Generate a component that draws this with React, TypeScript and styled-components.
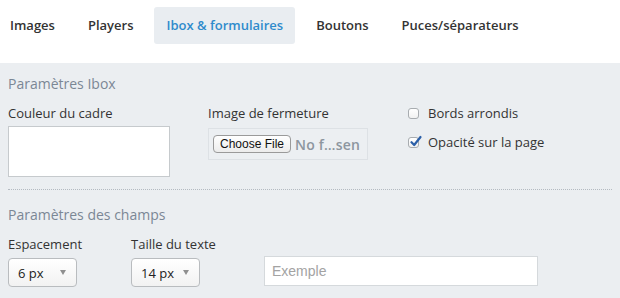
import React from "react";
import styled, { createGlobalStyle } from "styled-components";

const GlobalStyle = createGlobalStyle`
  html, body {
    margin: 0;
    padding: 0;
    background: #ffffff;
    font-family: "Open Sans", "Liberation Sans", sans-serif;
    color: #333333;
  }
  * {
    box-sizing: border-box;
  }
`;

const Page = styled.div`
  width: 620px;
  height: 298px;
  display: flex;
  flex-direction: column;
  overflow: hidden;
`;

const Nav = styled.nav`
  height: 63px;
  display: flex;
  align-items: flex-start;
  gap: 9px;
  padding-top: 7px;
  margin-left: -2px;
`;

const Tab = styled.div<{ $active?: boolean }>`
  height: 37px;
  line-height: 37px;
  padding: 0 12px;
  border-radius: 3px;
  font-size: 13px;
  font-weight: 600;
  color: ${(p) => (p.$active ? "#2f8bcc" : "#333333")};
  background: ${(p) => (p.$active ? "#e9edf1" : "transparent")};
  white-space: nowrap;
`;

const Panel = styled.div`
  flex: 1;
  background: #ebeef1;
  padding: 0 8px;
`;

const Section = styled.section<{ $top: number; $bottom?: number; $line?: boolean }>`
  padding-top: ${(p) => p.$top}px;
  padding-bottom: ${(p) => p.$bottom ?? 0}px;
  border-bottom: ${(p) => (p.$line ? "1px dotted #b4bac1" : "none")};
`;

const Heading = styled.h2`
  margin: 0 0 10px;
  font-size: 14px;
  line-height: 20px;
  font-weight: 400;
  color: #7b8795;
`;

const Row = styled.div<{ $cols: string }>`
  display: grid;
  grid-template-columns: ${(p) => p.$cols};
  align-items: start;
`;

const Field = styled.div`
  display: flex;
  flex-direction: column;
`;

const Label = styled.label`
  font-size: 13px;
  line-height: 18px;
  color: #333333;
`;

const ColorBox = styled.div`
  margin-top: 4px;
  width: 162px;
  height: 51px;
  background: #ffffff;
  border: 1px solid #c6cacd;
`;

const FileBox = styled.div`
  margin-top: 6px;
  width: 160px;
  height: 32px;
  border: 1px solid #dde1e5;
  background: #eceff2;
  display: flex;
  align-items: center;
  padding-left: 4px;
  gap: 4px;
`;

const FileButton = styled.button`
  height: 18px;
  padding: 0 6px;
  border: 1px solid #9a9a9a;
  border-radius: 4px;
  background: linear-gradient(#ffffff, #ececec);
  font-family: "Liberation Sans", sans-serif;
  font-size: 12px;
  line-height: 16px;
  color: #111111;
`;

const FileName = styled.span`
  font-size: 14px;
  font-weight: 600;
  color: #8d969f;
  letter-spacing: 0.2px;
`;

const Checks = styled.div`
  display: flex;
  flex-direction: column;
  gap: 11px;
`;

const CheckRow = styled.div`
  display: flex;
  align-items: center;
  gap: 9px;
  font-size: 13px;
  line-height: 18px;
  color: #333333;
`;

const Box = styled.span`
  position: relative;
  width: 11px;
  height: 11px;
  border: 1px solid #a8acb0;
  border-radius: 3px;
  background: linear-gradient(#ffffff, #f1f1f1);
  display: inline-block;
  flex: none;
`;

const Tick = styled.svg`
  position: absolute;
  left: 0px;
  top: -3px;
`;

const Select = styled.div<{ $width: number }>`
  margin-top: 5px;
  width: ${(p) => p.$width}px;
  height: 29px;
  border: 1px solid #b9bcbf;
  border-radius: 4px;
  background: linear-gradient(#ffffff, #f2f2f2);
  display: flex;
  align-items: center;
  justify-content: space-between;
  padding: 0 9px 0 9px;
  font-size: 13px;
  color: #222222;
`;

const Arrow = styled.span`
  width: 0;
  height: 0;
  border-left: 3px solid transparent;
  border-right: 3px solid transparent;
  border-top: 5px solid #8f8f8f;
  margin-right: 1px;
`;

const TextInput = styled.input`
  margin-top: 21px;
  width: 274px;
  height: 30px;
  border: 1px solid #d5d9dc;
  background: #ffffff;
  padding: 0 7px;
  font-family: "Liberation Sans", sans-serif;
  font-size: 14px;
  outline: none;
  &::placeholder {
    color: #a3a3a3;
  }
`;

const Check = ({ checked, label }: { checked?: boolean; label: string }) => (
  <CheckRow>
    <Box>
      {checked && (
        <Tick width="13" height="13" viewBox="0 0 13 13">
          <path
            d="M2.5 7.2 L5.2 10 L11.5 2"
            fill="none"
            stroke="#2b5fa8"
            strokeWidth="2.2"
            strokeLinecap="round"
            strokeLinejoin="round"
          />
        </Tick>
      )}
    </Box>
    {label}
  </CheckRow>
);

const tabs = ["Images", "Players", "Ibox & formulaires", "Boutons", "Puces/séparateurs"];

const App = () => {
  return (
    <Page>
      <GlobalStyle />
      <Nav>
        {tabs.map((t) => (
          <Tab key={t} $active={t === "Ibox & formulaires"}>
            {t}
          </Tab>
        ))}
      </Nav>
      <Panel>
        <Section $top={11} $bottom={12} $line>
          <Heading>Paramètres Ibox</Heading>
          <Row $cols="200px 200px auto">
            <Field>
              <Label>Couleur du cadre</Label>
              <ColorBox />
            </Field>
            <Field>
              <Label>Image de fermeture</Label>
              <FileBox>
                <FileButton>Choose File</FileButton>
                <FileName>No f…sen</FileName>
              </FileBox>
            </Field>
            <Checks>
              <Check label="Bords arrondis" />
              <Check checked label="Opacité sur la page" />
            </Checks>
          </Row>
        </Section>
        <Section $top={15}>
          <Heading>Paramètres des champs</Heading>
          <Row $cols="123px 133px auto">
            <Field>
              <Label>Espacement</Label>
              <Select $width={69}>
                6 px
                <Arrow />
              </Select>
            </Field>
            <Field>
              <Label>Taille du texte</Label>
              <Select $width={69}>
                14 px
                <Arrow />
              </Select>
            </Field>
            <Field>
              <TextInput placeholder="Exemple" />
            </Field>
          </Row>
        </Section>
      </Panel>
    </Page>
  );
};

export default App;
